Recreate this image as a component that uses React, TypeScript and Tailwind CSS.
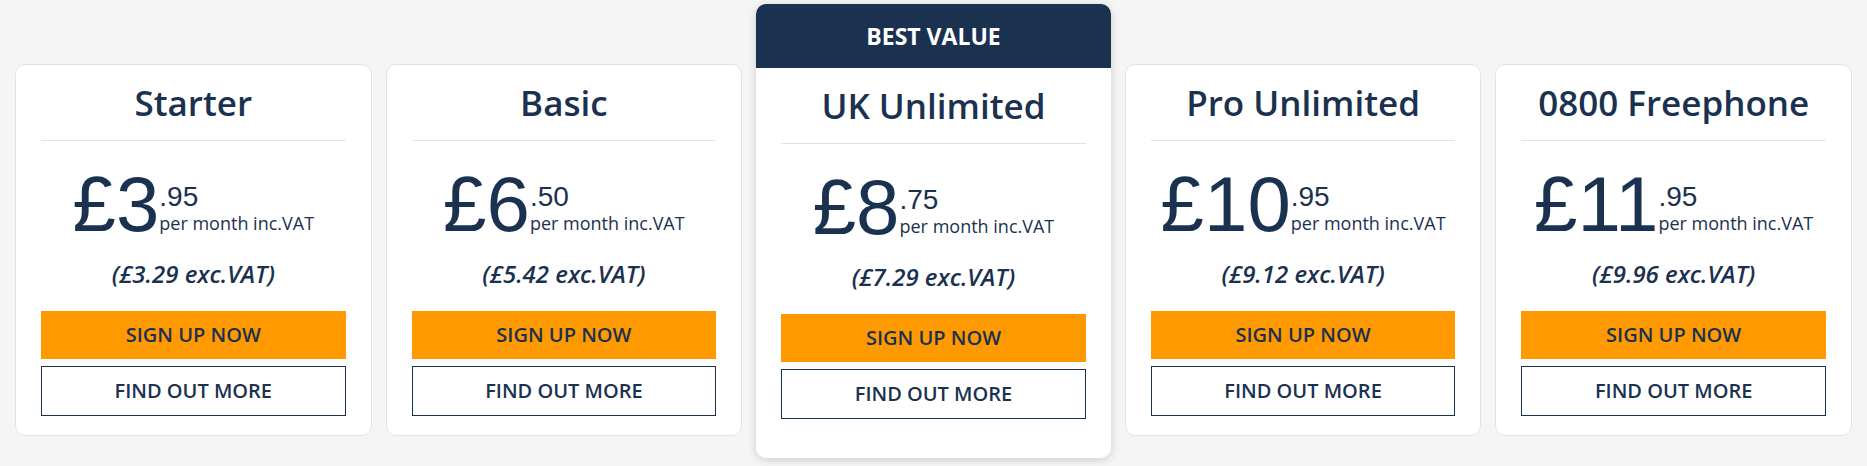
import React from 'react';

type Plan = {
  name: string;
  pounds: string;
  pence: string;
  exVat: string;
  featured?: boolean;
};

const plans: Plan[] = [
  { name: 'Starter', pounds: '3', pence: '.95', exVat: '(£3.29 exc.VAT)' },
  { name: 'Basic', pounds: '6', pence: '.50', exVat: '(£5.42 exc.VAT)' },
  { name: 'UK Unlimited', pounds: '8', pence: '.75', exVat: '(£7.29 exc.VAT)', featured: true },
  { name: 'Pro Unlimited', pounds: '10', pence: '.95', exVat: '(£9.12 exc.VAT)' },
  { name: '0800 Freephone', pounds: '11', pence: '.95', exVat: '(£9.96 exc.VAT)' },
];

function PlanBody({ plan }: { plan: Plan }) {
  return (
    <div className="px-[25px]">
      <div className="border-b border-[#e3e3e3] pt-[17px] pb-[16px] text-center text-[35px] leading-[1.2] font-semibold text-[#1b3150]">
        {plan.name}
      </div>

      <div className="mt-[24px] flex justify-center items-end text-[#1b3150]">
        <span className="font-['Liberation_Sans',Arial,sans-serif] text-[78px] leading-none">
          £{plan.pounds}
        </span>
        <div className="mb-[11px] flex flex-col">
          <span className="font-['Liberation_Sans',Arial,sans-serif] text-[28px] leading-none">
            {plan.pence}
          </span>
          <span className="mt-[3px] text-[18px] leading-none">per month inc.VAT</span>
        </div>
      </div>

      <div className="mt-[15px] text-center text-[24px] leading-[1.3] font-semibold italic text-[#1b3150]">
        {plan.exVat}
      </div>

      <button className="mt-[22px] flex h-[48px] w-full items-center justify-center bg-[#ff9900] text-[20px] font-semibold text-[#1b3150]">
        SIGN UP NOW
      </button>
      <button className="mt-[7px] flex h-[50px] w-full items-center justify-center border border-[#1b3150] bg-white text-[20px] font-semibold text-[#1b3150]">
        FIND OUT MORE
      </button>
    </div>
  );
}

export default function App() {
  return (
    <div className="min-h-[466px] w-full bg-[#f5f5f5] font-['Open_Sans',sans-serif]">
      <div className="flex items-start gap-[14px] px-[15px] pt-[4px]">
        {plans.map((plan) =>
          plan.featured ? (
            <div
              key={plan.name}
              className="flex-1 rounded-[10px] bg-white pb-[39px] shadow-[0_2px_10px_rgba(0,0,0,0.16)]"
            >
              <div className="flex h-[64px] items-center justify-center rounded-t-[10px] bg-[#1b3150] text-[23px] font-bold text-white">
                BEST VALUE
              </div>
              <PlanBody plan={plan} />
            </div>
          ) : (
            <div
              key={plan.name}
              className="mt-[60px] flex-1 rounded-[10px] border border-[#e3e3e3] bg-white pb-[19px]"
            >
              <PlanBody plan={plan} />
            </div>
          )
        )}
      </div>
    </div>
  );
}
